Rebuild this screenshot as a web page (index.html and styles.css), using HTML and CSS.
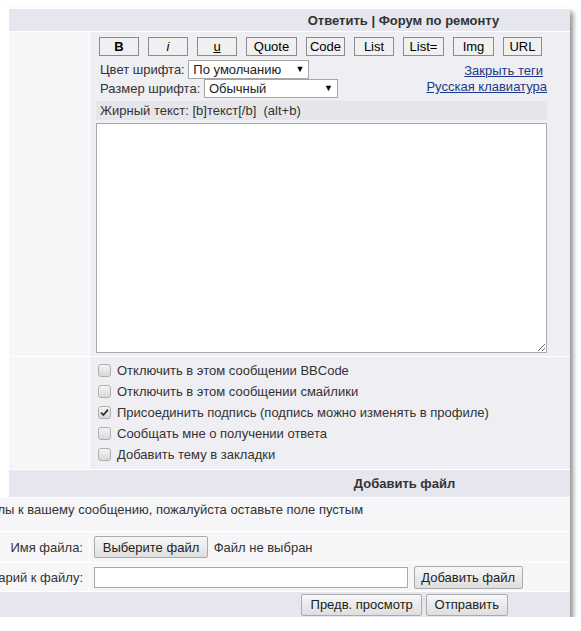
FILE: index.html
```html
<!DOCTYPE html>
<html lang="ru">
<head>
    <meta charset="UTF-8">
    <title>Ответить | Форум по ремонту</title>
    <link rel="stylesheet" href="styles.css">
</head>
<body>

<div class="post_frame">
    <!--форма ответа-->
    <table class="forumline top_part">
        <colgroup>
            <col class="col_left">
            <col>
        </colgroup>
        <tr>
            <th colspan="2" class="th_reply">Ответить | Форум по ремонту</th>
        </tr>
        <tr>
            <td class="row1"></td>
            <td class="row2 msg_cell">
                <div class="bb_buttons">
                    <button type="button" class="bb_btn bb_b">B</button>
                    <button type="button" class="bb_btn bb_i">i</button>
                    <button type="button" class="bb_btn bb_u">u</button>
                    <button type="button" class="bb_btn bb_quote">Quote</button>
                    <button type="button" class="bb_btn bb_code">Code</button>
                    <button type="button" class="bb_btn bb_list">List</button>
                    <button type="button" class="bb_btn bb_listeq">List=</button>
                    <button type="button" class="bb_btn bb_img">Img</button>
                    <button type="button" class="bb_btn bb_url">URL</button>
                </div>
                <div class="bb_opts">
                    <div class="bb_selects">
                        <div class="sel_line">Цвет шрифта: <span class="sel sel_color">По умолчанию<i>▼</i></span></div>
                        <div class="sel_line">Размер шрифта: <span class="sel sel_size">Обычный<i>▼</i></span></div>
                    </div>
                    <div class="bb_links">
                        <a href="#" class="close_tags">Закрыть теги</a>
                        <a href="#">Русская клавиатура</a>
                    </div>
                </div>
                <div class="helpline">Жирный текст: [b]текст[/b]&nbsp; (alt+b)</div>
                <textarea class="post_text" name="message"></textarea>
            </td>
        </tr>
        <tr>
            <td class="row1"></td>
            <td class="row2 opts_cell">
                <label class="opt"><span class="cb"></span>Отключить в этом сообщении BBCode</label>
                <label class="opt"><span class="cb"></span>Отключить в этом сообщении смайлики</label>
                <label class="opt"><span class="cb cb_on"><svg width="9" height="9" viewBox="0 0 9 9"><path d="M1 4.6 L3.4 7 L8 1.6" fill="none" stroke="#333" stroke-width="1.8"/></svg></span>Присоединить подпись (подпись можно изменять в профиле)</label>
                <label class="opt"><span class="cb"></span>Сообщать мне о получении ответа</label>
                <label class="opt"><span class="cb"></span>Добавить тему в закладки</label>
            </td>
        </tr>
        <tr>
            <th colspan="2" class="th_attach">Добавить файл</th>
        </tr>
    </table>

    <!--вложения-->
    <table class="forumline bottom_part">
        <colgroup>
            <col class="col_label">
            <col>
        </colgroup>
        <tr>
            <td colspan="2" class="att_note">Если вы не хотите добавлять файлы к вашему сообщению, пожалуйста оставьте поле пустым</td>
        </tr>
        <tr class="att_file">
            <td><div class="att_label">Имя файла:</div></td>
            <td class="att_field">
                <button type="button" class="sys_btn file_btn">Выберите файл</button>
                <span class="file_name">Файл не выбран</span>
            </td>
        </tr>
        <tr class="att_comment">
            <td><div class="att_label">Комментарий к файлу:</div></td>
            <td class="att_field">
                <input type="text" class="comment_input" name="filecomment">
                <button type="button" class="sys_btn add_btn">Добавить файл</button>
            </td>
        </tr>
        <tr>
            <td colspan="2" class="cat_bottom">
                <button type="button" class="sys_btn preview_btn">Предв. просмотр</button>
                <button type="submit" class="sys_btn send_btn">Отправить</button>
            </td>
        </tr>
    </table>
</div>

</body>
</html>
```

FILE: styles.css
```css
* {
    margin: 0;
    padding: 0;
    box-sizing: border-box;
}

body {
    background-color: white;
    font-family: "Liberation Sans", Arial, "Noto Sans", sans-serif;
    font-size: 13px;
    color: #333333;
}

.post_frame {
    width: 570px;
    height: 609px;
    margin-top: 8px;
    overflow: hidden;
    background-color: white;
    box-shadow: 3px 4px 5px rgba(0, 0, 0, 0.45);
}

.forumline {
    border-collapse: separate;
    border-spacing: 1px;
    table-layout: fixed;
}

.top_part {
    width: 788px;
    margin-left: 8px;
}

.bottom_part {
    width: 806px;
    margin-left: -1px;
    margin-top: -1px;
}

.col_left {
    width: 80px;
}

.col_label {
    width: 89px;
}

th {
    background-color: #E6E6EE;
    color: #333333;
    font-weight: bold;
    text-align: center;
}

.th_reply {
    height: 22px;
    padding-left: 3px;
}

.th_attach {
    height: 27px;
    padding-left: 5px;
}

.row1 {
    background-color: #F6F6F8;
}

.row2 {
    background-color: #EEEEF3;
}

/*панель bb-кодов*/
.msg_cell {
    padding: 5px 0 3px 6px;
    vertical-align: top;
}

.bb_buttons {
    display: flex;
    gap: 9px;
    margin-left: 3px;
}

.bb_btn {
    height: 19px;
    width: 40px;
    background-color: #F0F0F0;
    border: 1px solid #8C8C8C;
    font-family: inherit;
    font-size: 13px;
    color: black;
}

.bb_b {
    font-weight: bold;
}

.bb_i {
    font-style: italic;
}

.bb_u {
    text-decoration: underline;
}

.bb_quote {
    width: 51px;
}

.bb_code, .bb_url {
    width: 39px;
}

.bb_listeq, .bb_img {
    width: 41px;
}

.bb_opts {
    width: 451px;
    display: flex;
    justify-content: space-between;
    margin-top: 4px;
}

.bb_selects {
    padding-left: 4px;
}

.sel_line {
    height: 19px;
    line-height: 19px;
}

.sel {
    display: inline-flex;
    justify-content: space-between;
    align-items: center;
    height: 19px;
    padding: 0 4px 0 4px;
    background-color: white;
    border: 1px solid #A6A6A6;
    color: #222222;
    vertical-align: top;
}

.sel i {
    font-style: normal;
    font-size: 9px;
    color: black;
}

.sel_color {
    width: 121px;
}

.sel_size {
    width: 134px;
}

.bb_links {
    display: flex;
    flex-direction: column;
    align-items: flex-end;
    padding-top: 3px;
    line-height: 16px;
}

.bb_links a {
    color: #1D3A8A;
}

.close_tags {
    margin-right: 4px;
}

.helpline {
    width: 451px;
    height: 19px;
    line-height: 19px;
    margin-top: 3px;
    padding-left: 4px;
    background-color: #E6E6EA;
    color: #333333;
}

.post_text {
    display: block;
    width: 451px;
    height: 230px;
    margin-top: 3px;
    border: 1px solid #A9A9A9;
    background-color: white;
}

/*опции сообщения*/
.opts_cell {
    padding: 3px 0 4px 8px;
}

.opt {
    display: flex;
    align-items: center;
    gap: 6px;
    height: 21px;
    color: #333333;
}

.cb {
    display: inline-flex;
    align-items: center;
    justify-content: center;
    width: 13px;
    height: 13px;
    border: 1px solid #AFAFAF;
    border-radius: 3px;
    background: linear-gradient(#F4F4F4, #D8D8D8);
}

/*вложения*/
.bottom_part td {
    background-color: #F6F6F8;
}

.att_note {
    height: 33px;
    vertical-align: top;
    padding-top: 4px;
    white-space: nowrap;
    text-indent: -209px;
}

.att_file td {
    height: 30px;
}

.att_comment td {
    height: 28px;
}

/*длинная подпись уходит влево за край*/
.att_label {
    display: flex;
    justify-content: flex-end;
    padding-right: 6px;
    white-space: nowrap;
}

.att_field {
    padding-left: 4px;
}

.sys_btn {
    height: 22px;
    padding: 0 6px;
    background: linear-gradient(#F7F7F7, #DEDEDE);
    border: 1px solid #ABABAB;
    border-radius: 2px;
    font-family: inherit;
    font-size: 13px;
    color: #222222;
    vertical-align: middle;
}

.file_btn {
    width: 114px;
}

.file_name {
    margin-left: 2px;
    vertical-align: middle;
}

.comment_input {
    width: 314px;
    height: 21px;
    border: 1px solid #A9A9A9;
    vertical-align: middle;
}

.add_btn {
    width: 109px;
    height: 23px;
    margin-left: 2px;
}

.bottom_part .cat_bottom {
    height: 25px;
    padding-left: 5px;
    background-color: #E6E6EE;
    text-align: center;
}

.preview_btn {
    width: 121px;
}

.send_btn {
    width: 82px;
}
```
